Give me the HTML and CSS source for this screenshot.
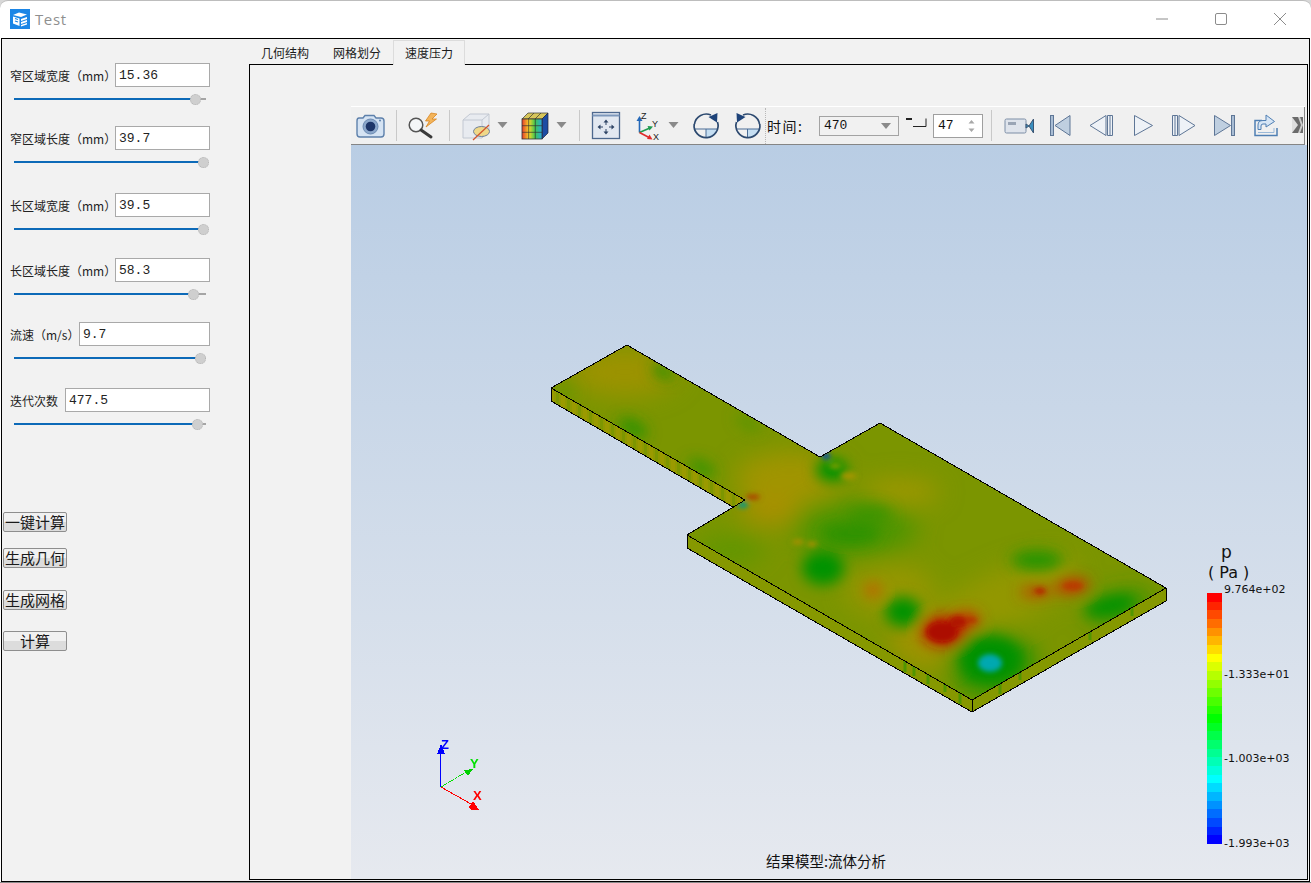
FILE: index.html
```html
<!DOCTYPE html>
<html lang="zh">
<head>
<meta charset="utf-8">
<title>Test</title>
<link rel="stylesheet" href="styles.css">
</head>
<body>
<div class="window">
  <header class="titlebar">
    <svg class="app-icon" width="20" height="20" viewBox="0 0 20 20">
      <rect width="20" height="20" fill="#1b86e6"/>
      <path d="M3 6 9 3.5 17 5.5 11 8Z M3 7.5 9.5 9.5V17L3 14.5Z" fill="#fff"/>
      <path d="M11 10 17 8V10L11 12ZM11 13 17 11V13L11 15ZM11 16 17 14V15.5L11 17.5Z" fill="#fff"/>
      <path d="M5 9.5 8 10.5M5 12 8 13" stroke="#1b86e6" stroke-width="1.2"/>
    </svg>
    <span class="app-title">Test</span>
    <div class="win-controls">
      <svg width="14" height="14" viewBox="0 0 14 14"><path d="M1 7H13" stroke="#8c8c8c"/></svg>
      <svg width="14" height="14" viewBox="0 0 14 14"><rect x="1.5" y="1.5" width="11" height="11" rx="1.5" fill="none" stroke="#8c8c8c"/></svg>
      <svg width="14" height="14" viewBox="0 0 14 14"><path d="M1 1 13 13M13 1 1 13" stroke="#8c8c8c"/></svg>
    </div>
  </header>

  <div class="main">
    <aside class="side">
      <div class="param">
        <div class="field"><label class="lab lab-mm">窄区域宽度（mm）</label><input class="num" value="15.36"></div>
        <div class="slider"><div class="fill" style="width:181px"></div><div class="knob"></div></div>
      </div>
      <div class="param">
        <div class="field"><label class="lab lab-mm">窄区域长度（mm）</label><input class="num" value="39.7"></div>
        <div class="slider"><div class="fill" style="width:189px"></div><div class="knob"></div></div>
      </div>
      <div class="param">
        <div class="field"><label class="lab lab-mm">长区域宽度（mm）</label><input class="num" value="39.5"></div>
        <div class="slider"><div class="fill" style="width:189px"></div><div class="knob"></div></div>
      </div>
      <div class="param">
        <div class="field"><label class="lab lab-mm">长区域长度（mm）</label><input class="num" value="58.3"></div>
        <div class="slider"><div class="fill" style="width:179px"></div><div class="knob"></div></div>
      </div>
      <div class="param">
        <div class="field"><label class="lab lab-ms">流速（m/s）</label><input class="num" value="9.7"></div>
        <div class="slider"><div class="fill" style="width:186px"></div><div class="knob"></div></div>
      </div>
      <div class="param">
        <div class="field"><label class="lab lab-it">迭代次数</label><input class="num" value="477.5"></div>
        <div class="slider"><div class="fill" style="width:183px"></div><div class="knob"></div></div>
      </div>
      <div class="actions">
        <button class="btn">一键计算</button>
        <button class="btn">生成几何</button>
        <button class="btn">生成网格</button>
        <button class="btn">计算</button>
      </div>
    </aside>

    <section class="work">
      <nav class="tabs">
        <span class="tab">几何结构</span>
        <span class="tab">网格划分</span>
        <span class="tab active">速度压力</span>
      </nav>
      <div class="panel">
        <div class="toolbar">
          <svg width="38" height="38" viewBox="351 106 38 38">
            <path d="M359 117H363L365 114.5H374L376 117H381Q384 117 384 120V133Q384 136 381 136H360Q357 136 357 133V120Q357 117 359 117Z" fill="#d5e3f3" stroke="#5d80ab" stroke-width="1.4"/>
            <circle cx="370.5" cy="125.5" r="7.5" fill="#8ba7cb" stroke="#6c8bb3"/>
            <circle cx="370.5" cy="125.5" r="4.8" fill="#1d3568"/>
            <circle cx="380" cy="119.5" r="1" fill="#5d80ab"/>
          </svg>
          <i class="sep sep-a"></i>
          <svg width="37" height="38" viewBox="404 106 37 38">
            <circle cx="416" cy="124" r="6.8" fill="#f4f6f8" stroke="#555" stroke-width="1.5"/>
            <path d="M421 129 431 136" stroke="#3a3a3a" stroke-width="3" stroke-linecap="round"/>
            <path d="M431 112 425.500 120 429.500 120 426 126 436.500 118 432 118 437 113Z" fill="#f3b45a" stroke="#d67d12" stroke-width=".7"/>
          </svg>
          <i class="sep sep-b"></i>
          <svg width="38" height="38" viewBox="458 106 38 38">
            <path d="M463 119 470 113H489V130L482 137H463Z" fill="#e8ebf0" stroke="#c2c8d2"/>
            <path d="M463 119H482V137M482 119 489 113" fill="none" stroke="#c2c8d2"/>
            <ellipse cx="481.5" cy="130.5" rx="8" ry="5" fill="#efd889" stroke="#6d7f9b"/>
            <path d="M473 139 489 124" stroke="#d2532b" stroke-width="1.2"/>
          </svg>
          <svg class="tri-slot" width="14" height="38" viewBox="496 106 14 38"><path d="M497.500 121H507.500L502.500 127Z" fill="#8a8a8a"/></svg>
          <svg width="43" height="38" viewBox="510 106 43 38">
            <defs>
              <linearGradient id="cubeFace" x1="0" x2="1" y1="0" y2="0">
                <stop offset="0" stop-color="#e73c2c"/><stop offset=".35" stop-color="#f3d629"/><stop offset=".65" stop-color="#3fc74f"/><stop offset="1" stop-color="#27a9e0"/>
              </linearGradient>
            </defs>
            <path d="M522 118 528 112H548L542 118Z" fill="#d7c65a" stroke="#333" stroke-width=".7"/>
            <path d="M542 118 548 112V132L542 138Z" fill="#1d4ca3" stroke="#223" stroke-width=".7"/>
            <rect x="522" y="118" width="20" height="20" fill="url(#cubeFace)" stroke="#333" stroke-width=".8"/>
            <path d="M528.700 118V138M535.300 118V138M522 124.700H542M522 131.300H542M528 118 534 112M535 118 541 112" stroke="#333" stroke-width=".7" fill="none"/>
          </svg>
          <svg width="18" height="38" viewBox="553 106 18 38"><path d="M556.500 121H566.500L561.500 127Z" fill="#8a8a8a"/></svg>
          <i class="sep sep-b"></i>
          <svg width="36" height="38" viewBox="588 106 36 38">
            <rect x="592.500" y="111.500" width="27" height="26" fill="#e2e8f1" stroke="#4d688e" stroke-width="1.3"/>
            <path d="M592.500 114.500H619.500" stroke="#7d97bb" stroke-width="2"/>
            <path d="M606 118.500 603.500 121.500H608.500ZM606 133.500 603.500 130.500H608.500ZM597.500 126 600.500 123.500V128.500ZM614.500 126 611.500 123.500V128.500Z" fill="#2f4566"/>
            <path d="M606 120V124M606 128V132M599 126H603M609 126H613" stroke="#2f4566"/>
          </svg>
          <svg width="41" height="38" viewBox="624 106 41 38">
            <path d="M639.500 131.500V118" stroke="#2468b8" stroke-width="1.6"/><path d="M639.500 115 636.500 120H642.500Z" fill="#2468b8"/>
            <path d="M639.500 131.500 651 126.500" stroke="#1f9b50" stroke-width="1.6"/><path d="M653 125.500 647.500 125 649.500 129.500Z" fill="#1f9b50"/>
            <path d="M639.500 131.500 650 137" stroke="#e02b2b" stroke-width="1.6"/><path d="M652.500 138.500 649.500 133.500 647 138Z" fill="#e02b2b"/>
            <text class="axis-mini" x="641" y="118">Z</text><text class="axis-mini" x="652" y="126">Y</text><text class="axis-mini" x="653" y="139">X</text>
          </svg>
          <svg width="17" height="38" viewBox="665 106 17 38"><path d="M668.500 121H678.500L673.500 127Z" fill="#8a8a8a"/></svg>
          <svg width="45" height="38" viewBox="682 106 45 38">
            <path d="M706 128H717.300A12 12 0 0 1 706 137Z" fill="#c5def2"/>
            <path d="M694.300 128H717.500M706 128V137" stroke="#4a6d96" stroke-width="1"/>
            <path d="M694.500 123A12 12 0 0 1 711 114M717.500 121A12 12 0 1 1 694.200 123" fill="none" stroke="#2d4a70" stroke-width="1.7"/>
            <path d="M717.500 112 717 121.500 708.500 116Z" fill="#1e4379"/>
          </svg>
          <svg width="38" height="38" viewBox="727 106 38 38">
            <path d="M747.500 128H759A12 12 0 0 1 747.500 137Z" fill="#c5def2"/>
            <path d="M736 128H759.500M747.500 128V137" stroke="#4a6d96" stroke-width="1"/>
            <path d="M759.500 123A12 12 0 0 0 743 114M736.500 121A12 12 0 1 0 759.800 123" fill="none" stroke="#2d4a70" stroke-width="1.7"/>
            <path d="M736.500 112 737 121.500 745.500 116Z" fill="#1e4379"/>
          </svg>
          <i class="dots"></i>
          <span class="time-lab">时间:</span>
          <div class="combo"><span>470</span><svg width="10" height="6" viewBox="0 0 10 6"><path d="M0 0H10L5 6Z" fill="#8a8a8a"/></svg></div>
          <svg width="34" height="38" viewBox="899 106 34 38">
            <path d="M906 117.500H912M913 125.500H926V117.500M906 118.500H912" fill="none" stroke="#222" stroke-width="1"/>
          </svg>
          <div class="spin"><span>47</span><svg width="7" height="14" viewBox="0 0 7 14"><path d="M3.500 1 6.500 4.500H.5ZM3.500 13 .5 9.500H6.500Z" fill="#a8a8a8"/></svg></div>
          <i class="sep sep-b"></i>
          <div class="player">
            <svg width="40" height="38" viewBox="1000 108 40 38">
              <rect x="1005" y="120" width="21" height="14" rx="1.500" fill="#dfe4ec" stroke="#7c8ea6"/>
              <rect x="1008" y="123" width="8" height="3" fill="#9aa5b5"/>
              <path d="M1026 125 1029 127 1033.500 120V134L1029 127 1026 129Z" fill="#3a8fbf" stroke="#3c5674"/>
            </svg>
            <svg width="40" height="38" viewBox="1040 108 40 38">
              <rect x="1050.500" y="116.500" width="3" height="20" fill="#a9bdd4" stroke="#5e7696"/>
              <path d="M1070 116.500V136.500L1055 126.500Z" fill="#bfcfe0" stroke="#5e7696"/>
            </svg>
            <svg width="42" height="38" viewBox="1080 108 42 38">
              <path d="M1106 116.500V136.500L1090 126.500Z" fill="#eef2f7" stroke="#5e7696"/>
              <path d="M1107.500 116.500H1112.500V136.500H1107.500ZM1110 116.500V136.500" fill="#eef2f7" stroke="#5e7696"/>
            </svg>
            <svg width="41" height="38" viewBox="1122 108 41 38">
              <path d="M1134.500 116.500V136.500L1152.500 126.500Z" fill="#eef2f7" stroke="#5e7696"/>
            </svg>
            <svg width="41" height="38" viewBox="1163 108 41 38">
              <path d="M1172.500 116.500H1177.500V136.500H1172.500ZM1175 116.500V136.500" fill="#eef2f7" stroke="#5e7696"/>
              <path d="M1179 116.500V136.500L1195 126.500Z" fill="#eef2f7" stroke="#5e7696"/>
            </svg>
            <svg width="40" height="38" viewBox="1204 108 40 38">
              <path d="M1214.500 116.500V136.500L1230.500 126.500Z" fill="#bfcfe0" stroke="#5e7696"/>
              <rect x="1231.500" y="116.500" width="3" height="20" fill="#a9bdd4" stroke="#5e7696"/>
            </svg>
            <svg width="41" height="38" viewBox="1244 108 41 38">
              <path d="M1262 121.500H1255V136.500H1277V129" fill="none" stroke="#4f7fb3" stroke-width="1.500"/>
              <path d="M1258 130.500V126Q1258 121.500 1263 121.500H1266V116L1274.500 122.500 1266 128V125H1263Q1261 125 1261 127V130.500Z" fill="#d6e5f5" stroke="#4f7fb3"/>
              <path d="M1258 133.500H1274V129" fill="none" stroke="#9bb9d8"/>
            </svg>
            <svg width="20" height="38" viewBox="1285 108 20 38">
              <rect x="1292" y="118" width="11" height="16" fill="#6b6b6b"/>
              <path d="M1292 118 1298 126 1292 134Z" fill="#dedede"/>
              <path d="M1298 118H1300L1303 126 1300 134H1298L1301 126Z" fill="#cfcfcf"/>
            </svg>
          </div>
        </div>

        <div class="viewport">
          <svg class="scene" width="956" height="734" viewBox="351 145 956 734">
            <defs>
              <pattern id="sideStripes" width="11" height="60" patternUnits="userSpaceOnUse">
                <rect width="11" height="60" fill="#8f9900"/>
                <rect x="0" width="4" height="60" fill="#9a9a00"/>
                <rect x="6" width="3" height="60" fill="#7d9600"/>
              </pattern>
              <clipPath id="plateClip">
                <polygon points="627,345 820,457 880,423 1166,588 972,700 687,535 745,500 551,388"/>
              </clipPath>
              <filter id="wide" filterUnits="userSpaceOnUse" x="500" y="300" width="720" height="450">
                <feGaussianBlur stdDeviation="12"/>
              </filter>
              <filter id="soft" filterUnits="userSpaceOnUse" x="500" y="300" width="720" height="450">
                <feGaussianBlur stdDeviation="7"/>
              </filter>
              <filter id="softer" filterUnits="userSpaceOnUse" x="500" y="300" width="720" height="450">
                <feGaussianBlur stdDeviation="2.5"/>
              </filter>
            </defs>

            <polygon points="551,388 551,401 733,507 745,500" fill="url(#sideStripes)"/>
            <polygon points="687,535 687,548 972,712 972,700" fill="#869800"/>
            <polygon points="972,700 972,712 1166,601 1166,588" fill="#859800"/>
            <path d="M905 672V656M914 676V661M928 684V669M945 692V680M960 704V690M1000 694V680M1020 680V668M1090 640V625M1132 616V604" stroke="#2f9500" stroke-width="3" opacity=".6"/>

            <g clip-path="url(#plateClip)">
              <rect x="540" y="335" width="640" height="380" fill="#7b9500"/>
              <g filter="url(#wide)">
                <ellipse cx="625" cy="372" rx="55" ry="24" fill="#9c9300"/>
                <ellipse cx="790" cy="478" rx="55" ry="26" fill="#a09400"/>
                <ellipse cx="770" cy="510" rx="30" ry="16" fill="#a89000"/>
                <ellipse cx="900" cy="492" rx="40" ry="12" fill="#a29700"/>
                <ellipse cx="1000" cy="600" rx="85" ry="28" fill="#939700" transform="rotate(-24 1000 600)"/>
                <ellipse cx="890" cy="590" rx="45" ry="26" fill="#959600"/>
                <ellipse cx="940" cy="640" rx="50" ry="28" fill="#a09300"/>
                <ellipse cx="855" cy="528" rx="62" ry="30" fill="#4f9500"/>
                <ellipse cx="730" cy="550" rx="35" ry="14" fill="#5f9600"/>
                <ellipse cx="990" cy="662" rx="42" ry="30" fill="#089300"/>
                <ellipse cx="1120" cy="606" rx="34" ry="13" fill="#2f9400" transform="rotate(-14 1120 606)"/>
              </g>
              <g filter="url(#soft)">
                <ellipse cx="663" cy="372" rx="12" ry="6" fill="#2a9200" transform="rotate(30 663 372)"/>
                <ellipse cx="633" cy="428" rx="16" ry="8" fill="#2f9300" transform="rotate(28 633 428)"/>
                <ellipse cx="702" cy="468" rx="15" ry="7" fill="#389400" transform="rotate(28 702 468)"/>
                <ellipse cx="748" cy="423" rx="14" ry="5" fill="#559500" transform="rotate(30 748 423)"/>
                <ellipse cx="566" cy="392" rx="11" ry="5" fill="#659500"/>
                <ellipse cx="850" cy="534" rx="30" ry="11" fill="#2f9300"/>
                <ellipse cx="870" cy="515" rx="22" ry="10" fill="#3f9400"/>
                <ellipse cx="832" cy="470" rx="16" ry="12" fill="#049300"/>
                <ellipse cx="823" cy="568" rx="21" ry="17" fill="#039300"/>
                <ellipse cx="903" cy="612" rx="18" ry="15" fill="#039300"/>
                <ellipse cx="1037" cy="560" rx="26" ry="10" fill="#289400"/>
                <ellipse cx="1110" cy="606" rx="26" ry="9" fill="#059300" transform="rotate(-14 1110 606)"/>
                <ellipse cx="990" cy="658" rx="30" ry="22" fill="#009200"/>
                <ellipse cx="873" cy="590" rx="8" ry="7" fill="#c26000"/>
                <ellipse cx="1072" cy="586" rx="18" ry="8" fill="#c24000" transform="rotate(-8 1072 586)"/>
                <ellipse cx="1036" cy="592" rx="16" ry="5" fill="#c04200"/>
                <ellipse cx="966" cy="620" rx="14" ry="9" fill="#c24000"/>
                <ellipse cx="943" cy="631" rx="22" ry="15" fill="#c01400"/>
              </g>
              <g filter="url(#softer)">
                <ellipse cx="990" cy="663" rx="12" ry="9" fill="#00a8b0"/>
                <ellipse cx="942" cy="632" rx="15" ry="10" fill="#ac0800"/>
                <ellipse cx="958" cy="622" rx="9" ry="6" fill="#b01800"/>
                <ellipse cx="971" cy="620" rx="6" ry="3" fill="#b63000"/>
                <ellipse cx="1040" cy="591" rx="6" ry="3" fill="#b52000"/>
                <ellipse cx="1073" cy="586" rx="10" ry="4" fill="#b93a00"/>
                <ellipse cx="753" cy="497" rx="7" ry="2.500" fill="#ad3c00"/>
                <ellipse cx="743" cy="505" rx="5" ry="3" fill="#009a90"/>
                <ellipse cx="826" cy="456" rx="4" ry="3" fill="#0044c0"/>
                <ellipse cx="835" cy="466" rx="6" ry="3" fill="#7c9c00"/>
                <ellipse cx="849" cy="476" rx="8" ry="4" fill="#a29600"/>
                <ellipse cx="798" cy="542" rx="6" ry="2.500" fill="#ac9000"/>
                <ellipse cx="812" cy="544" rx="5" ry="2.500" fill="#ac9000"/>
              </g>
            </g>

            <g class="edges">
              <polygon points="627,345 820,457 880,423 1166,588 972,700 687,535 745,500 551,388"/>
              <path d="M551 388V401L733 507M687 535V548L972 712L1166 601V588M972 700V712"/>
            </g>

            <g class="triad">
              <path d="M440.500 787V750" stroke="#0000ff"/>
              <path d="M441 744 437 754H445Z" fill="#0000ff"/>
              <path d="M441 787 466 772" stroke="#00e000" stroke-dasharray="3 1"/>
              <path d="M473 769 464 770 468 776Z" fill="#00d000"/>
              <path d="M441 787 471 804" stroke="#ff0000"/>
              <path d="M479 810 473 801 469 807 471 810Z" fill="#ff0000"/>
              <text class="axis z" x="441" y="749">Z</text>
              <text class="axis y" x="470" y="768">Y</text>
              <text class="axis x" x="473" y="800">X</text>
            </g>
          </svg>

          <div class="legend">
            <div class="legend-title">p</div>
            <div class="legend-unit"><span>(</span><span>Pa</span><span>)</span></div>
            <div class="legend-body">
              <div class="legend-bar"></div>
              <div class="legend-ticks">
                <span>9.764e+02</span>
                <span>-1.333e+01</span>
                <span>-1.003e+03</span>
                <span>-1.993e+03</span>
              </div>
            </div>
          </div>
          <div class="caption">结果模型:流体分析</div>
        </div>
      </div>
    </section>
  </div>
</div>
</body>
</html>
```

FILE: styles.css
```css
* { box-sizing: border-box; }
html, body { margin: 0; height: 100%; background: #d8d8d8; overflow: hidden; }
body { font-family: "Noto Sans CJK SC", "Liberation Sans", sans-serif; color: #111; }
svg { display: block; flex: none; }

.window {
  width: 1311px;
  height: 883px;
  display: flex;
  flex-direction: column;
  background: #fff;
  border-top: 1px solid #bdbdbd;
  border-radius: 8px 8px 0 0;
  overflow: hidden;
  border-bottom: 1px solid #8a8a8a;
}

.titlebar {
  height: 37px;
  flex: none;
  display: flex;
  align-items: center;
  padding: 0 24px 2px 10px;
}
.app-title { margin-left: 5px; font: 15px "Open Sans", sans-serif; color: #8f8f8f; letter-spacing: .6px; }
.win-controls { margin-left: auto; display: flex; gap: 45px; }

.main {
  flex: 1;
  margin: 0 1px 0 1px;
  width: 1309px;
  border: 1px solid #000;
  background: #f2f2f2;
  display: flex;
  min-height: 0;
}

/* ---- left column ---- */
.side {
  width: 247px;
  flex: none;
  padding: 24px 0 0 8px;
  display: flex;
  flex-direction: column;
}
.param { height: 42px; width: 200px; }
.param:nth-child(2) { margin-top: 21px; }
.param:nth-child(3) { margin-top: 25px; }
.param:nth-child(4) { margin-top: 23px; }
.param:nth-child(5) { margin-top: 22px; }
.param:nth-child(6) { margin-top: 24px; }
.field { display: flex; align-items: center; height: 24px; }
.lab { font-size: 12px; flex: none; color: #222; white-space: nowrap; }
.lab-mm { width: 105px; }
.lab-ms { width: 69px; }
.lab-it { width: 55px; }
.num {
  flex: 1;
  min-width: 0;
  height: 24px;
  border: 1px solid #a9a9a9;
  background: #fff;
  padding: 1px 2px 0 3px;
  font: 13px "Liberation Mono", monospace;
  color: #222;
}
.slider {
  position: relative;
  margin: 6px 0 0 4px;
  width: 192px;
  height: 12px;
  display: flex;
  align-items: center;
}
.slider::before {
  content: "";
  position: absolute;
  left: 0; right: 0; top: 5px;
  height: 2px;
  background: #a5a5a5;
}
.fill { position: relative; height: 2px; background: #0d6ab8; flex: none; }
.knob {
  position: relative;
  width: 11px; height: 11px;
  margin-left: -5px;
  border-radius: 50%;
  background: #cfcfcf;
  border: 1px dotted #b5b5b5;
  flex: none;
}
.actions {
  margin-top: 82px;
  margin-left: -7px;
  display: flex;
  flex-direction: column;
  align-items: flex-start;
}
.btn {
  width: 64px;
  height: 20px;
  padding: 0;
  border: 1px solid #8e8e8e;
  border-radius: 2px;
  background: linear-gradient(#f1f1f1 0 50%, #dcdcdc 50% 100%);
  font: 15px/18px "Noto Sans CJK SC", sans-serif;
  color: #1a1a1a;
  white-space: nowrap;
  overflow: hidden;
}
.btn:nth-child(2) { margin-top: 16px; }
.btn:nth-child(3) { margin-top: 22px; }
.btn:nth-child(4) { margin-top: 21px; }

/* ---- right column ---- */
.work { flex: 1; min-width: 0; display: flex; flex-direction: column; padding-right: 1px; padding-bottom: 1px; }
.tabs { height: 25px; flex: none; display: flex; padding-top: 1px; }
.tab {
  width: 72px;
  height: 24px;
  text-align: center;
  font-size: 12px;
  line-height: 25px;
  color: #1c1c1c;
}
.tab.active { border: 1px solid #dcdcdc; border-bottom: 0; line-height: 23px; position: relative; z-index: 1; height: 25px; background: #f2f2f2; }

.panel {
  flex: 1;
  min-height: 0;
  border: 1px solid #000;
  padding: 41px 0 0 101px;
  display: flex;
  flex-direction: column;
}
.toolbar {
  height: 39px;
  flex: none;
  width: 954px;
  display: flex;
  align-items: center;
  background: #f0f0f0;
  border-top: 1px solid #fff;
  border-bottom: 1px solid #858585;
}
.sep { display: block; width: 1px; height: 31px; background: #c9c9c9; flex: none; }
.sep-a { margin: 0 7px; }
.sep-b { margin: 0 8px; }
.dots { display: block; width: 2px; height: 36px; flex: none; border-left: 1px dotted #b8b8b8; }
.axis-mini { font: 9px "Liberation Sans", sans-serif; fill: #222; }
.time-lab { width: 52px; flex: none; font-size: 14px; letter-spacing: 1.5px; color: #111; }
.combo {
  width: 80px;
  height: 20px;
  flex: none;
  border: 1px solid #a3a3a3;
  background: #f1f1f1;
  display: flex;
  align-items: center;
  justify-content: space-between;
  padding: 0 7px 0 4px;
  font: 13px "Liberation Mono", monospace;
}
.spin {
  width: 50px;
  height: 24px;
  flex: none;
  border: 1px solid #9f9f9f;
  background: #fff;
  display: flex;
  align-items: center;
  justify-content: space-between;
  padding: 0 7px 0 4px;
  font: 13px "Liberation Mono", monospace;
}
.player {
  width: 305px;
  height: 38px;
  flex: none;
  display: flex;
  border-right: 1px solid #858585;
}

.viewport {
  position: relative;
  flex: 1;
  min-height: 0;
  background: linear-gradient(#b9cde4, #e6e9ef);
  overflow: hidden;
}
.scene { position: absolute; left: 0; top: 0; }
.edges { fill: none; stroke: #000; stroke-width: 1; shape-rendering: crispEdges; }
.triad path { shape-rendering: crispEdges; }
.axis { font: bold 13px "Liberation Sans", sans-serif; }
.axis.z { fill: #0000ff; }
.axis.y { fill: #00e000; }
.axis.x { fill: #ff0000; }

.legend {
  position: absolute;
  left: 856px;
  top: 398px;
  width: 90px;
  color: #111;
}
.legend-title { font: 17px/19px "DejaVu Sans", sans-serif; height: 20px; padding-left: 14px; }
.legend-unit {
  display: flex;
  font: 16px/19px "DejaVu Sans", sans-serif;
  gap: 5px;
  padding-left: 1px;
}
.legend-body { display: flex; margin-top: 11px; }
.legend-bar {
  width: 15px;
  height: 251px;
  flex: none;
  background: linear-gradient(
    #ff0000 0 3.45%, #ff2400 0 6.9%, #ff4900 0 10.34%, #ff6d00 0 13.79%, #ff9200 0 17.24%,
    #ffb600 0 20.69%, #ffdb00 0 24.14%, #ffff00 0 27.59%, #dbff00 0 31.03%, #b6ff00 0 34.48%,
    #92ff00 0 37.93%, #6dff00 0 41.38%, #49ff00 0 44.83%, #24ff00 0 48.28%, #00ff00 0 51.72%,
    #00ff24 0 55.17%, #00ff49 0 58.62%, #00ff6d 0 62.07%, #00ff92 0 65.52%, #00ffb6 0 68.97%,
    #00ffdb 0 72.41%, #00ffff 0 75.86%, #00dbff 0 79.31%, #00b6ff 0 82.76%, #0092ff 0 86.21%,
    #006dff 0 89.66%, #0049ff 0 93.1%, #0024ff 0 96.55%, #0000ff 0 100%
  );
}
.legend-ticks {
  display: flex;
  flex-direction: column;
  justify-content: space-between;
  margin: -10px 0 -7px 2px;
  font: 11px/14px "DejaVu Sans", sans-serif;
  white-space: nowrap;
}
.caption {
  position: absolute;
  left: 415px;
  top: 706px;
  font-size: 14.500px;
  line-height: 20px;
  color: #111;
  white-space: nowrap;
}
```
